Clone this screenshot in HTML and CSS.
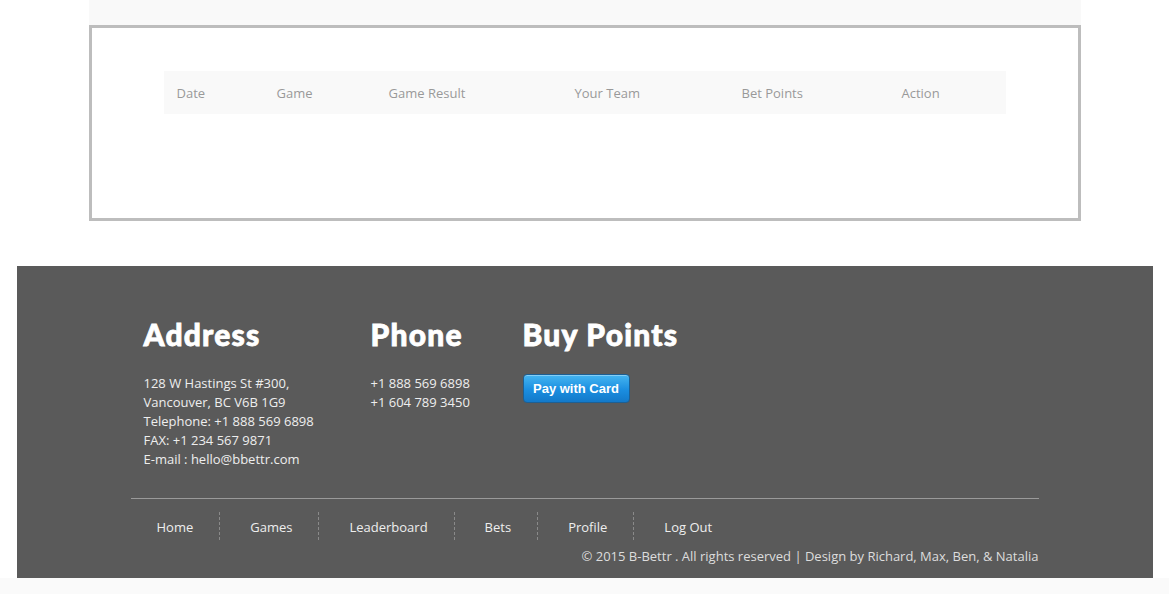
FILE: index.html
```html
<!DOCTYPE html>
<html>
<head>
<meta charset="utf-8">
<link rel="stylesheet" href="styles.css">
</head>
<body>
<div class="page">
  <div class="top-strip"></div>
  <div class="box">
    <div class="thead">
      <div class="th">Date</div>
      <div class="th">Game</div>
      <div class="th">Game Result</div>
      <div class="th">Your Team</div>
      <div class="th">Bet Points</div>
      <div class="th">Action</div>
    </div>
  </div>
  <footer class="footer">
    <div class="footer-inner">
      <div class="cols">
        <div class="col col-address">
          <h2 class="heading">Address</h2>
          <p class="text">128 W Hastings St #300,<br>Vancouver, BC V6B 1G9<br>Telephone: +1 888 569 6898<br>FAX: +1 234 567 9871<br>E-mail : hello@bbettr.com</p>
        </div>
        <div class="col col-phone">
          <h2 class="heading">Phone</h2>
          <p class="text">+1 888 569 6898<br>+1 604 789 3450</p>
        </div>
        <div class="col col-buy">
          <h2 class="heading">Buy Points</h2>
          <button class="pay-btn">Pay with Card</button>
        </div>
      </div>
      <div class="divider"></div>
      <ul class="nav">
        <li class="nav-item">Home</li>
        <li class="nav-item">Games</li>
        <li class="nav-item">Leaderboard</li>
        <li class="nav-item">Bets</li>
        <li class="nav-item">Profile</li>
        <li class="nav-item">Log Out</li>
      </ul>
      <div class="copyright">© 2015 B-Bettr . All rights reserved | Design by Richard, Max, Ben, &amp; Natalia</div>
    </div>
  </footer>
  <div class="bottom-strip"></div>
</div>
</body>
</html>
```

FILE: styles.css
```css
html, body {
  margin: 0;
  padding: 0;
  background: #ffffff;
  font-family: "Open Sans", "Liberation Sans", sans-serif;
}

.page {
  display: flex;
  flex-direction: column;
  align-items: center;
  min-height: 594px;
}

.top-strip {
  width: 992px;
  height: 25px;
  background: #f9f9f9;
}

.box {
  box-sizing: border-box;
  width: 992px;
  height: 196px;
  border: 3px solid #bdbdbd;
  background: #fff;
  padding-top: 43px;
  display: flex;
  justify-content: center;
}

.thead {
  width: 842px;
  height: 43px;
  background: #f9f9f9;
  display: grid;
  grid-template-columns: 100px 112px 186px 167px 160px 1fr;
  align-items: center;
}

.th {
  padding-left: 13px;
  padding-top: 1px;
  font-size: 13px;
  color: #999;
}

.footer {
  margin-top: 45px;
  width: 1136px;
  height: 312px;
  background: #5a5a5a;
  display: flex;
  justify-content: center;
  box-sizing: border-box;
  padding-top: 50px;
}

.footer-inner {
  width: 908px;
}

.cols {
  display: flex;
  padding-left: 13px;
  height: 182px;
}

.col-address { width: 227px; }
.col-phone { width: 152px; }

.heading {
  margin: 0;
  font-family: "Lato", sans-serif;
  font-weight: 900;
  font-size: 30px;
  letter-spacing: 1.2px;
  line-height: 36px;
  color: #fff;
  -webkit-text-stroke: 0.8px #fff;
}

.text {
  margin: 22px 0 0;
  font-size: 13px;
  line-height: 19px;
  color: #eee;
}

.pay-btn {
  margin-top: 22px;
  width: 107px;
  height: 29px;
  border: 1px solid #1d5f93;
  border-radius: 4px;
  background: linear-gradient(#45b5f1, #1b8ee0 55%, #1379c9);
  box-shadow: inset 0 1px 0 rgba(255,255,255,0.35);
  color: #fff;
  font-family: "Liberation Sans", Arial, sans-serif;
  font-weight: bold;
  font-size: 13px;
  padding: 0;
}

.divider {
  height: 1px;
  background: #9a9a9a;
}

.nav {
  list-style: none;
  margin: 13px 0 0;
  padding: 0;
  display: flex;
}

.nav-item {
  padding: 2px 26px 0 30px;
  height: 26px;
  line-height: 26px;
  font-size: 13px;
  color: #eee;
  border-right: 1px dashed #8a8a8a;
}

.nav-item:first-child { padding-left: 26px; }
.nav-item:last-child { border-right: none; }

.copyright {
  margin-top: 6px;
  text-align: right;
  font-size: 13px;
  line-height: 20px;
  color: #ddd;
}

.bottom-strip {
  align-self: stretch;
  flex: 1;
  background: #fafafa;
}
```
